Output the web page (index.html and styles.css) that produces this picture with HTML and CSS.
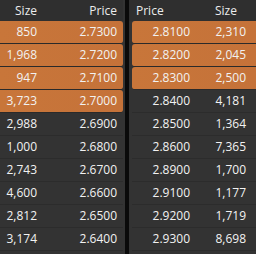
FILE: index.html
```html
<!DOCTYPE html>
<html>
<head>
<meta charset="utf-8">
<link rel="stylesheet" href="styles.css">
</head>
<body>
<div class="book">
  <div class="panel bids">
    <div class="head"><span>Size</span><span>Price</span></div>
    <div class="row hi"><span>850</span><span>2.7300</span></div>
    <div class="row hi"><span>1,968</span><span>2.7200</span></div>
    <div class="row hi"><span>947</span><span>2.7100</span></div>
    <div class="row hi"><span>3,723</span><span>2.7000</span></div>
    <div class="row"><span>2,988</span><span>2.6900</span></div>
    <div class="row"><span>1,000</span><span>2.6800</span></div>
    <div class="row"><span>2,743</span><span>2.6700</span></div>
    <div class="row"><span>4,600</span><span>2.6600</span></div>
    <div class="row"><span>2,812</span><span>2.6500</span></div>
    <div class="row"><span>3,174</span><span>2.6400</span></div>
  </div>
  <div class="divider"></div>
  <div class="panel asks">
    <div class="head"><span>Price</span><span>Size</span></div>
    <div class="row hi"><span>2.8100</span><span>2,310</span></div>
    <div class="row hi"><span>2.8200</span><span>2,045</span></div>
    <div class="row hi"><span>2.8300</span><span>2,500</span></div>
    <div class="row"><span>2.8400</span><span>4,181</span></div>
    <div class="row"><span>2.8500</span><span>1,364</span></div>
    <div class="row"><span>2.8600</span><span>7,365</span></div>
    <div class="row"><span>2.8900</span><span>1,700</span></div>
    <div class="row"><span>2.9100</span><span>1,177</span></div>
    <div class="row"><span>2.9200</span><span>1,719</span></div>
    <div class="row"><span>2.9300</span><span>8,698</span></div>
  </div>
</div>
</body>
</html>
```
FILE: styles.css
```css
html, body {
  margin: 0;
  padding: 0;
  background: #333333;
}
body {
  font-family: "Open Sans", "Liberation Sans", sans-serif;
  font-size: 12px;
  color: #f2f2f2;
}
.book {
  display: flex;
  width: 256px;
  height: 254px;
  overflow: hidden;
}
.panel {
  display: flex;
  flex-direction: column;
  background: #333333;
}
.bids { width: 125px; }
.asks { width: 127px; }
.divider {
  width: 4px;
  background: #0a0a0a;
}
.head {
  height: 21px;
  display: grid;
  align-items: center;
  background: #2f2f2f;
  color: #ececec;
  line-height: 21px;
}
.row {
  height: 22px;
  line-height: 22px;
  display: grid;
  align-items: center;
  border-bottom: 1px solid #2c2c2c;
}
.row.hi {
  background: linear-gradient(90deg, #c8763a, #c57239);
  border-bottom-color: #2a2a2a;
}
.bids .head,
.bids .row {
  grid-template-columns: 37px 80px;
  margin-right: 2px;
}
.bids .head span,
.bids .row span {
  text-align: right;
}
.bids .row.hi {
  border-radius: 0 3px 3px 0;
}
.asks .head {
  grid-template-columns: 79px 40px;
  padding-left: 7px;
}
.asks .row {
  grid-template-columns: 58px 56px;
  margin-left: 3px;
}
.asks .row span {
  text-align: right;
}
.asks .row.hi {
  border-radius: 3px 0 0 3px;
}
```
